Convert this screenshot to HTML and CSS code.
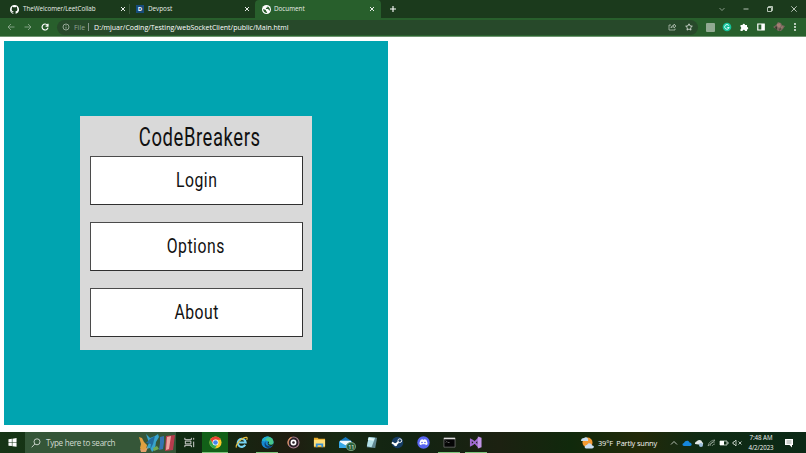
FILE: index.html
```
<!DOCTYPE html>
<html lang="en">
<head>
<meta charset="utf-8">
<title>Document</title>
<link rel="stylesheet" href="styles.css">
</head>
<body>
<div class="desktop">
  <header class="tabs">
    <div class="tab tab-first">
      <svg class="favicon" viewBox="0 0 16 16"><path fill="#fff" d="M8 0C3.58 0 0 3.58 0 8c0 3.54 2.29 6.53 5.47 7.59.4.07.55-.17.55-.38v-1.49c-2.01.37-2.53-.49-2.69-.94-.09-.23-.48-.94-.82-1.13-.28-.15-.68-.52-.01-.53.63-.01 1.08.58 1.23.82.72 1.21 1.87.87 2.33.66.07-.52.28-.87.51-1.07-1.78-.2-3.64-.89-3.64-3.95 0-.87.31-1.59.82-2.15-.08-.2-.36-1.02.08-2.12 0 0 .67-.21 2.2.82a7.4 7.4 0 0 1 4 0c1.53-1.04 2.2-.82 2.2-.82.44 1.1.16 1.92.08 2.12.51.56.82 1.27.82 2.15 0 3.07-1.87 3.75-3.65 3.95.29.25.54.73.54 1.48v2.2c0 .21.15.46.55.38A8 8 0 0 0 8 0"/></svg>
      <span class="tab-name name-github">TheWelcomer/LeetCollab</span>
      <svg class="close" viewBox="0 0 6 6"><path d="M1 1l4 4M5 1L1 5"/></svg>
    </div>
    <div class="tab tab-second">
      <span class="devpost">D</span>
      <span class="tab-name">Devpost</span>
      <svg class="close" viewBox="0 0 6 6"><path d="M1 1l4 4M5 1L1 5"/></svg>
    </div>
    <div class="tab tab-active">
      <svg class="favicon" viewBox="0 0 16 16"><circle cx="8" cy="8" r="8" fill="#fff"/><path fill="#285f2c" d="M2 7l5 2v2l2 1v2C5 14 2 12 2 7m6-5c3 0 5 2 6 5v3l-2-1-1-2H7V5h2l1-2z"/></svg>
      <span class="tab-name">Document</span>
      <svg class="close" viewBox="0 0 6 6"><path d="M1 1l4 4M5 1L1 5"/></svg>
    </div>
    <svg class="plus" viewBox="0 0 8 8"><path d="M4 1v6M1 4h6"/></svg>
    <div class="window-buttons">
      <svg viewBox="0 0 8 8"><path opacity=".7" d="M1.5 3L4 5.5 6.500 3"/></svg>
      <svg viewBox="0 0 8 8"><path d="M1.500 4h5"/></svg>
      <svg viewBox="0 0 8 8"><path d="M1.500 2.500h4v4h-4zM2.500 2.500v-1h4v4h-1"/></svg>
      <svg viewBox="0 0 8 8"><path d="M1.300 1.300l5.400 5.400M6.700 1.300L1.300 6.700"/></svg>
    </div>
  </header>
  <nav class="toolbar">
    <svg class="nav-icon dim" viewBox="0 0 8 8"><path d="M7.500 4H1M4 1L1 4l3 3"/></svg>
    <svg class="nav-icon dim" viewBox="0 0 8 8"><path d="M.5 4H7M4 1l3 3-3 3"/></svg>
    <svg class="nav-icon reload" viewBox="0 0 8 8"><path d="M6.500 2.200A3 3 0 1 0 7 4.700M7 .7v2.400H4.600"/></svg>
    <div class="address">
      <svg class="info" viewBox="0 0 8 8"><circle cx="4" cy="4" r="3"/><path d="M4 3.700v2M4 2.200v.7"/></svg>
      <span class="scheme">File</span><i class="divider"></i><span class="url">D:/mjuar/Coding/Testing/webSocketClient/public/Main.html</span>
      <svg class="share" viewBox="0 0 9 8"><path d="M3 2H1v5h6V5.500M3 5c0-2 1.500-2.500 3-2.500V1l2 2-2 2V3.700C4.500 3.700 3.500 4 3 5z"/></svg>
      <svg class="star" viewBox="0 0 8 8"><path d="M4 .8l1 2.100 2.300.3-1.700 1.600.4 2.300-2-1.100-2 1.100.4-2.300L.7 3.200 3 2.900z"/></svg>
    </div>
    <div class="extensions">
      <i class="grey-ext"></i>
      <svg viewBox="0 0 10 10"><circle cx="5" cy="5" r="4.300" fill="#15c39a"/><path d="M6.800 3.500A2.300 2.300 0 1 0 7.200 5.500H5.300" fill="none" stroke="#dff" stroke-width="1"/></svg>
      <svg viewBox="0 0 10 10"><path fill="#fff" d="M1.500 3h2.100a1.200 1.200 0 1 1 2.400 0h2v2a1.200 1.200 0 1 1 0 2.400V9H6a1.200 1.200 0 0 0-2.400 0H1.500V7a1.200 1.200 0 0 0 0-2.200z"/></svg>
      <svg viewBox="0 0 10 10"><path d="M1.800 2h6.400v6H1.800z" fill="none" stroke="#fff" stroke-width="1.200"/><path d="M5.300 2h3v6h-3z" fill="#fff"/></svg>
      <svg class="avatar" viewBox="0 0 12 10"><path fill="#75685d" d="M0 5l3-2 2-3 3 1 1 2 3 1-2 3-2 2H5L3 7z"/><path fill="#a57d73" d="M4 2l3-1 1 3-2 2-2-2zM8 5l2-1-1 3z"/><path fill="#3d382f" d="M3 4l1 1v3L2 6zm4 2l1 1-2 2z"/></svg>
      <svg viewBox="0 0 10 10"><g fill="#fff"><circle cx="5" cy="2" r=".9"/><circle cx="5" cy="5" r=".9"/><circle cx="5" cy="8" r=".9"/></g></svg>
    </div>
  </nav>
  <main class="page">
    <div class="stage">
      <section class="menu">
        <h1><span>CodeBreakers</span></h1>
        <button type="button"><span class="login">Login</span></button>
        <button type="button"><span class="options">Options</span></button>
        <button type="button"><span class="about">About</span></button>
      </section>
    </div>
  </main>
  <footer class="taskbar">
    <div class="start"><svg viewBox="0 0 10 10"><path fill="#fff" d="M.5 1.400l3.800-.6v3.800H.5zM4.900.7L9.500 0v4.600H4.900zM.5 5.200h3.800V9L.5 8.500zM4.900 5.200h4.600v4.600L4.900 9.100z"/></svg></div>
    <div class="search">
      <svg class="lens" viewBox="0 0 10 10"><circle cx="6" cy="3.800" r="3"/><path d="M3.800 6L.7 9.300"/></svg>
      <span>Type here to search</span>
      <svg class="art" viewBox="0 0 38 20"><path fill="#e0a040" d="M1 4l3 1 2 4 3 3-1 5-4 1-2-3 1-4z"/><path fill="#38a4cc" d="M8 1l4 4 5-2 3-2 1 3-3 5-1 7-3 3-2-4-4 1 3-6z"/><path fill="#236b9d" d="M12 6l5-3-2 8-3 6 1-6-5-1z"/><path fill="#71a951" d="M15 15l4-2 2 3-5 2z"/><path fill="#3474b1" d="M22 4l4-1v6l-1 7-4 1 1-7z"/><path fill="#e3a06c" d="M2 16l4 1 4-3-2 5H3z"/><path fill="#b83c4d" d="M28 3l9-1-2 15-8 1z"/><path fill="#eda5a0" d="M29 4l4-1-2 13-3 1z"/></svg>
    </div>
    <div class="app"><svg viewBox="0 0 14 14"><path d="M2 2v2h7V2M2 12v-2h7v2M2.500 5.500h6v3h-6zM11.500 2v2M11.500 6v6" fill="none" stroke="#ddd"/></svg></div>
    <div class="app current"><svg viewBox="0 0 14 14"><circle cx="7" cy="7" r="6.500" fill="#fbc928"/><path fill="#e84436" d="M1.400 3.700A6.500 6.500 0 0 1 12.700 4H7L4.500 8.500z"/><path fill="#31a752" d="M1.400 3.700l3.100 5.100L8.800 9.500 6.500 13.500A6.500 6.500 0 0 1 1.400 3.700"/><circle cx="7" cy="7" r="3.200" fill="#fff"/><circle cx="7" cy="7" r="2.500" fill="#4285ed"/></svg></div>
    <div class="app"><svg viewBox="0 0 14 14"><path d="M11 9.500A4.300 4.300 0 1 1 11.500 7H4.200" fill="none" stroke="#77d4f4" stroke-width="2.300"/><path d="M1.500 12.500C0 9 8 1 12.500 1.500c1 .2.500 2 0 2.800" fill="none" stroke="#e9c13c" stroke-width="1.200"/></svg></div>
    <div class="app open"><svg viewBox="0 0 14 14"><circle cx="7" cy="7" r="6.500" fill="#1689d1"/><path fill="#48c78e" d="M1 5C3-1 13-.5 13.500 6.500c0 4-4.500 3.500-5.500 2.300C10 6 6 3.500 1 5"/><path fill="#20afd8" d="M1 5c1-4 6-5.500 9-3.500C6 1 4 4 4.500 6z"/><path fill="#103f74" d="M5 6c-1 4 3 6 7 4.500C10 14 5 13.500 4 10c-.5-2 0-3 1-4"/><path fill="#18301b" d="M8 6c2 1-1 2 .5 3 2 1 4 .5 5-1l-1 2.500C8 12 6 8 8 6"/></svg></div>
    <div class="app"><svg viewBox="0 0 14 14"><circle cx="7" cy="7" r="5.900" fill="#2b2028" stroke="#a77e8e" stroke-width="1.200"/><path d="M2 10a5.900 5.900 0 0 1 3-8.500" fill="none" stroke="#d68d60" stroke-width="1.300"/><circle cx="7" cy="7" r="2.300" fill="none" stroke="#fff" stroke-width="1.700"/></svg></div>
    <div class="app"><svg viewBox="0 0 14 14"><path fill="#e8ab28" d="M1 2h4l1 1h7v9H1z"/><path fill="#ffdf78" d="M1 4h12v7H1z"/><path fill="#3a91d2" d="M3 8h8v4H9v-2H5v2H3z"/></svg></div>
    <div class="app mail"><svg viewBox="0 0 14 14"><path fill="#1679be" d="M0 6l7-5 7 5v7H0z"/><path fill="#f4faff" d="M1 5h12v3l-6 3-6-3z"/><path fill="#38a8e5" d="M0 6l7 4 7-4v7H0z"/></svg><b>11</b></div>
    <div class="app"><svg viewBox="0 0 14 14"><path fill="#608891" d="M4 1l9 1-2 11-9-1z"/><path fill="#b2e1e8" d="M4 1l7 1-4 10-5-1z"/><path fill="#e1f8f7" d="M4 2l6 1-1 2-6-1z"/></svg></div>
    <div class="app"><svg viewBox="0 0 14 14"><circle cx="7" cy="7" r="6.200" fill="#163d65"/><path d="M1 7l4 2.500L9.500 5" fill="none" stroke="#fff" stroke-width="2.200"/><circle cx="9.500" cy="5" r="2" fill="#173c60" stroke="#fff"/><circle cx="5" cy="9.500" r="1.600" fill="#fff"/></svg></div>
    <div class="app"><svg viewBox="0 0 14 14"><circle cx="7" cy="7" r="6.700" fill="#5865f2"/><path fill="#fff" d="M4 4l2-.6.5.7h1L8 3.400l2 .6c1 1.700 1.500 3.500 1.300 5L9.500 10 9 9H5l-.5 1-1.800-1C2.500 7.500 3 5.700 4 4"/><circle cx="5.400" cy="7" r=".9" fill="#5865f2"/><circle cx="8.600" cy="7" r=".9" fill="#5865f2"/></svg></div>
    <div class="app open"><svg viewBox="0 0 14 14"><path fill="#050505" stroke="#777" stroke-width=".8" d="M1 2h12v10H1z"/><path fill="#ddd" d="M1 2h12v1.500H1z"/><path d="M3 5l1 1-1 1M5 7h2" stroke="#aaa" stroke-width=".6" fill="none"/></svg></div>
    <div class="app open"><svg viewBox="0 0 14 14"><path fill="none" stroke="#a06bd0" stroke-width="2" d="M2 4v6l2-1 6-6v8L4 5z"/><path fill="#c193e6" d="M9.500.5L13.500 2v10l-4 1.500z"/></svg></div>
    <div class="weather">
      <svg viewBox="0 0 14 14"><circle cx="7.500" cy="6.500" r="5" fill="#f49a32"/><path fill="#c8ddf1" d="M1 5c0-2 1-3 3-3 2-2 5 0 4 3zM5 12c-1-2 1-3 2-3 1-3 5-2 5 .5 3 0 2 3 0 3H6z"/></svg>
      <span>39°F&nbsp; Partly sunny</span>
    </div>
    <div class="tray">
      <svg viewBox="0 0 10 10"><path d="M2 6.500l3-3 3 3"/></svg>
      <svg viewBox="0 0 10 10"><path class="solid blue" d="M2 8C0 8 0 5 2 5c1-3 5-3 5.500-.5C10 4.500 10.500 8 8 8z"/></svg>
      <svg viewBox="0 0 10 10"><path class="solid pale" d="M1 6c0-3 2-2 2-3 2-2 5-1 5 1 2 1 1 3 0 3z"/><circle cx="7" cy="7" r="2" class="solid blue-pale"/></svg>
      <svg viewBox="0 0 10 10"><path d="M1 8l7-6M3 8a5 5 0 0 1 5-4M5 8a3 3 0 0 1 3-2M1 8a7 7 0 0 1 7-6" opacity=".6"/></svg>
      <svg viewBox="0 0 10 10"><path d="M1 3h7v4H1zM9 4v2"/><path class="solid white" d="M1 3h4v4H1z"/></svg>
      <svg viewBox="0 0 10 10"><path d="M1 4h1l2-2v6L2 6H1zM6.500 3.500l3 3M9.500 3.500l-3 3"/></svg>
    </div>
    <div class="clock"><span>7:48 AM</span><span>4/2/2023</span></div>
    <svg class="notice" viewBox="0 0 10 10"><path fill="#fff" d="M1 1h8v6H8v2.500L5.500 7H1z"/><path stroke="#526154" stroke-width=".6" d="M2.500 3h5M2.500 5h5"/></svg>
  </footer>
</div>
</body>
</html>
```
FILE: styles.css
```
* { box-sizing: border-box; }
body { margin: 0; background: #fff; font-family: "Open Sans", "Noto Sans", sans-serif; }
svg { display: block; flex: none; }
.desktop { width: 806px; height: 453px; display: flex; flex-direction: column; overflow: hidden; }
.tabs { height: 18px; flex: none; background: #1b3a1c; display: flex; align-items: center; color: #e8eee8; }
.tab { height: 18px; display: flex; align-items: center; font-size: 6.3px; line-height: 18px; }
.tab-first { width: 130px; padding: 0 4px 0 10px; background: linear-gradient(#3a573b, #3a573b) 100% 50% / 1px 10px no-repeat; }
.tab-second { width: 125px; padding: 0 5px 0 6px; }
.tab-active { width: 126px; padding: 0 6px 0 7px; background: #285f2c; border-radius: 4px 4px 0 0; }
.favicon { width: 9px; height: 9px; margin-right: 3px; }
.tab-name { flex: 1; white-space: nowrap; }
.name-github { letter-spacing: -.06px; padding-left: 1px; }
.devpost { width: 8px; height: 8px; margin-right: 4px; background: #174c7b; color: #fff; font: bold 6px/8px "Open Sans", sans-serif; text-align: center; }
.close { width: 6px; height: 6px; fill: none; stroke: #fff; stroke-width: .9; }
.plus { width: 8px; height: 8px; margin-left: 8px; fill: none; stroke: #fff; stroke-width: 1.1; }
.window-buttons { margin-left: auto; padding-right: 8px; display: flex; gap: 16px; }
.window-buttons svg { width: 8px; height: 8px; fill: none; stroke: #dce5dc; stroke-width: .8; }
.toolbar { height: 19px; flex: none; display: flex; align-items: center; background: #285f2c; border-bottom: 1px solid #6f9571; padding-left: 7px; }
.nav-icon { width: 8px; height: 8px; margin-right: 9px; fill: none; stroke: #fff; stroke-width: .9; }
.dim { opacity: .45; }
.reload { margin-right: 8px; stroke-width: 1.2; }
.address { width: 641px; height: 15px; border-radius: 8px; background: #27492a; display: flex; align-items: center; padding: 0 5px; color: #fff; font-size: 7px; white-space: nowrap; }
.info, .share, .star { width: 8px; height: 8px; fill: none; stroke: #c3cec3; stroke-width: .7; }
.info { margin-right: 4px; }
.scheme { color: #94a595; }
.divider { width: 1px; height: 8px; background: #84958b; margin: 0 5px 0 3px; }
.share { width: 9px; margin-left: auto; margin-right: 8px; }
.star { stroke: #fff; }
.extensions { margin-left: auto; display: flex; align-items: center; gap: 7px; padding-right: 6px; }
.extensions svg { width: 10px; height: 10px; }
.extensions .avatar { width: 12px; margin: 0 -1px; transform: translateX(1px); }
.grey-ext { width: 9px; height: 9px; background: #91aa92; border-radius: 1px; }
.page { height: 395px; flex: none; padding: 4px; background: #fff; }
.stage { width: 384px; height: 384px; background: #00a4b0; padding: 75px 0 0 76px; }
.menu { width: 232px; height: 234px; background: #d9d9d9; padding: 0 9.500px 0 10px; font-family: Roboto, sans-serif; color: #111; }
h1 { margin: 0; height: 40px; font-size: 26px; line-height: 43px; font-weight: 400; text-align: center; display: flex; justify-content: center; padding-left: 6px; }
h1 span { transform: scaleX(.71); letter-spacing: .8px; }
.menu button { display: flex; justify-content: center; align-items: center; width: 212.500px; height: 49px; margin: 0 0 17px; padding: 0; background: #fff; border: 1px solid #4b4b4b; border-right-color: #303030; border-bottom-color: #303030; color: #111; font: 21px/49px Roboto, sans-serif; }
.menu button span { transform: scaleX(.75); letter-spacing: .7px; }
.taskbar { height: 21px; flex: none; display: flex; align-items: center; background: linear-gradient(90deg, #173516 0, #102b12 200px, #1f1d10 290px, #172912 335px, #122412 410px, #1c2111 500px, #10290c 570px, #222909 640px, #102b14 700px, #0b2916); color: #f3f5f2; }
.start { width: 25px; padding-left: 8px; }
.start svg { width: 9px; height: 9px; }
.search { width: 151px; height: 21px; background: #355638; display: flex; align-items: center; padding-left: 6px; font-size: 8.100px; letter-spacing: -.28px; color: #d3ddd3; white-space: nowrap; }
.lens { width: 10px; height: 10px; margin-right: 5px; fill: none; stroke: #e8eee8; stroke-width: .8; }
.art { width: 38px; height: 20px; margin-left: auto; }
.app { width: 26.050px; height: 21px; display: flex; justify-content: center; align-items: center; flex: none; position: relative; }
.app svg { width: 13px; height: 13px; }
.open { background: linear-gradient(#7cc47b, #7cc47b) 50% 100% / 22px 1px no-repeat; }
.current { background: #126018 linear-gradient(#7cc47b, #7cc47b) 50% 100% / 100% 1px no-repeat; }
.mail b { position: absolute; left: 14px; top: 10px; width: 10px; height: 9px; border-radius: 50%; background: #28613b; border: .5px solid #789d7b; color: #fff; font: 5.500px/8px "Open Sans", sans-serif; text-align: center; }
.weather { margin-left: auto; display: flex; align-items: center; gap: 4px; font-size: 7.400px; letter-spacing: -.16px; white-space: nowrap; width: 89px; }
.weather svg { width: 14px; height: 14px; }
.tray { display: flex; gap: 2.600px; }
.tray svg { width: 10px; height: 10px; fill: none; stroke: #dce4dc; stroke-width: .8; }
.tray .solid { stroke: none; }
.blue { fill: #1687db; }
.pale { fill: #e3e8e7; }
.blue-pale { fill: #9abddb; }
.white { fill: #fff; }
.clock { width: 38px; display: flex; flex-direction: column; align-items: center; font-size: 6.200px; letter-spacing: -.08px; line-height: 9.500px; white-space: nowrap; }
.notice { width: 10px; height: 10px; margin: 0 12px 0 4px; }
```
